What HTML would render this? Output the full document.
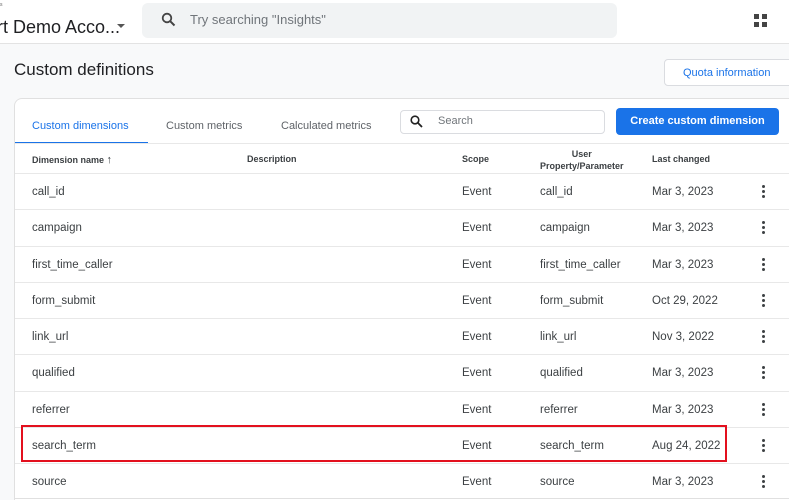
<!DOCTYPE html>
<html style="width:789px;height:500px;overflow:hidden"><head><style>
*{box-sizing:border-box;margin:0;padding:0}
body{width:789px;height:500px;overflow:hidden;background:#f8f9fa;font-family:"Liberation Sans",Arial,sans-serif;position:relative;color:#3c4043}
.top{position:absolute;left:0;top:0;width:789px;height:44px;background:#fff;border-bottom:1px solid #e3e3e3}
.abs{position:absolute;white-space:nowrap}
.card{position:absolute;left:14px;top:98px;width:800px;height:402px;background:#fff;border:1px solid #e0e0e0;border-bottom:none;border-radius:8px 8px 0 0}
.row{position:absolute;left:15px;width:780px;height:36.25px;border-top:1px solid #e8e8e8;font-size:11.5px;color:#3c4043}
.row span{position:absolute;top:12px}
.dots{position:absolute;left:747px;top:11px;width:3px}
.dots i{display:block;width:3px;height:3px;border-radius:50%;background:#3c4043;margin-bottom:2px}
.th{position:absolute;font-size:9px;font-weight:bold;color:#3c4043}
</style></head><body>
<div class="top"></div>
<div class="abs" style="left:0;top:2px;font-size:5px;color:#666">s</div>
<div class="abs" style="left:-3px;top:17px;font-size:18px;color:#202124">rt Demo Acco...</div>
<div class="abs" style="left:117px;top:24px;width:0;height:0;border-left:4px solid transparent;border-right:4px solid transparent;border-top:4px solid #555"></div>
<div class="abs" style="left:142px;top:3px;width:475px;height:35px;background:#f1f3f4;border-radius:6px"></div>
<svg class="abs" style="left:161px;top:12px" width="15" height="15" viewBox="0 0 15 15"><circle cx="6" cy="6" r="4.3" fill="none" stroke="#444" stroke-width="1.8"/><path d="M9.2 9.2L13.5 13.5" stroke="#444" stroke-width="2"/></svg>
<div class="abs" style="left:190px;top:12px;font-size:13px;color:#70757a">Try searching "Insights"</div>
<svg class="abs" style="left:754px;top:14px" width="14" height="14"><rect x="0" y="0" width="5" height="5" fill="#444"/><rect x="8" y="0" width="5" height="5" fill="#444"/><rect x="0" y="8" width="5" height="5" fill="#444"/><rect x="8" y="8" width="5" height="5" fill="#444"/></svg>
<div class="abs" style="left:14px;top:60px;font-size:17px;color:#202124">Custom definitions</div>
<div class="abs" style="left:664px;top:59px;width:130px;height:27px;background:#fff;border:1px solid #dadce0;border-radius:4px;font-size:11px;color:#1a73e8;padding:7px 0 0 18px">Quota information</div>
<div class="card"></div>
<div class="abs" style="left:32px;top:120px;font-size:11px;color:#1a73e8">Custom dimensions</div>
<div class="abs" style="left:15px;top:142px;width:133px;height:2px;background:#1a73e8"></div>
<div class="abs" style="left:15px;top:143px;width:780px;height:1px;background:#e8e8e8"></div>
<div class="abs" style="left:166px;top:120px;font-size:11px;color:#5f6368">Custom metrics</div>
<div class="abs" style="left:281px;top:120px;font-size:11px;color:#5f6368">Calculated metrics</div>
<div class="abs" style="left:400px;top:110px;width:205px;height:24px;border:1px solid #dadce0;border-radius:4px"></div>
<svg class="abs" style="left:410px;top:115px" width="13" height="13" viewBox="0 0 13 13"><circle cx="5" cy="5" r="3.8" fill="none" stroke="#222" stroke-width="1.6"/><path d="M7.8 7.8L12 12" stroke="#222" stroke-width="1.8"/></svg>
<div class="abs" style="left:438px;top:115px;font-size:11px;color:#70757a">Search</div>
<div class="abs" style="left:616px;top:108px;width:163px;height:27px;background:#1a73e8;border-radius:4px;color:#fff;font-size:11px;font-weight:bold;text-align:center;padding-top:7px">Create custom dimension</div>
<div class="th" style="left:32px;top:154px">Dimension name <span style="font-size:11px">↑</span></div>
<div class="th" style="left:247px;top:154px">Description</div>
<div class="th" style="left:462px;top:154px">Scope</div>
<div class="th" style="left:540px;top:148px;text-align:center;line-height:12px">User<br>Property/Parameter</div>
<div class="th" style="left:652px;top:154px">Last changed</div>

<div class="row" style="top:173px"><span style="left:17px">call_id</span><span style="left:447px">Event</span><span style="left:525px">call_id</span><span style="left:637px">Mar 3, 2023</span><div class="dots"><i></i><i></i><i></i></div></div>
<div class="row" style="top:209.25px"><span style="left:17px">campaign</span><span style="left:447px">Event</span><span style="left:525px">campaign</span><span style="left:637px">Mar 3, 2023</span><div class="dots"><i></i><i></i><i></i></div></div>
<div class="row" style="top:245.5px"><span style="left:17px">first_time_caller</span><span style="left:447px">Event</span><span style="left:525px">first_time_caller</span><span style="left:637px">Mar 3, 2023</span><div class="dots"><i></i><i></i><i></i></div></div>
<div class="row" style="top:281.75px"><span style="left:17px">form_submit</span><span style="left:447px">Event</span><span style="left:525px">form_submit</span><span style="left:637px">Oct 29, 2022</span><div class="dots"><i></i><i></i><i></i></div></div>
<div class="row" style="top:318px"><span style="left:17px">link_url</span><span style="left:447px">Event</span><span style="left:525px">link_url</span><span style="left:637px">Nov 3, 2022</span><div class="dots"><i></i><i></i><i></i></div></div>
<div class="row" style="top:354.25px"><span style="left:17px">qualified</span><span style="left:447px">Event</span><span style="left:525px">qualified</span><span style="left:637px">Mar 3, 2023</span><div class="dots"><i></i><i></i><i></i></div></div>
<div class="row" style="top:390.5px"><span style="left:17px">referrer</span><span style="left:447px">Event</span><span style="left:525px">referrer</span><span style="left:637px">Mar 3, 2023</span><div class="dots"><i></i><i></i><i></i></div></div>
<div class="row" style="top:426.75px"><span style="left:17px">search_term</span><span style="left:447px">Event</span><span style="left:525px">search_term</span><span style="left:637px">Aug 24, 2022</span><div class="dots"><i></i><i></i><i></i></div></div>
<div class="row" style="top:463px;height:36px"><span style="left:17px">source</span><span style="left:447px">Event</span><span style="left:525px">source</span><span style="left:637px">Mar 3, 2023</span><div class="dots"><i></i><i></i><i></i></div></div>
<div class="abs" style="left:15px;top:498px;width:780px;height:1px;background:#e0e0e0"></div>
<div class="abs" style="left:21px;top:425px;width:706px;height:37px;border:2px solid #e3101e"></div>
</body></html>
